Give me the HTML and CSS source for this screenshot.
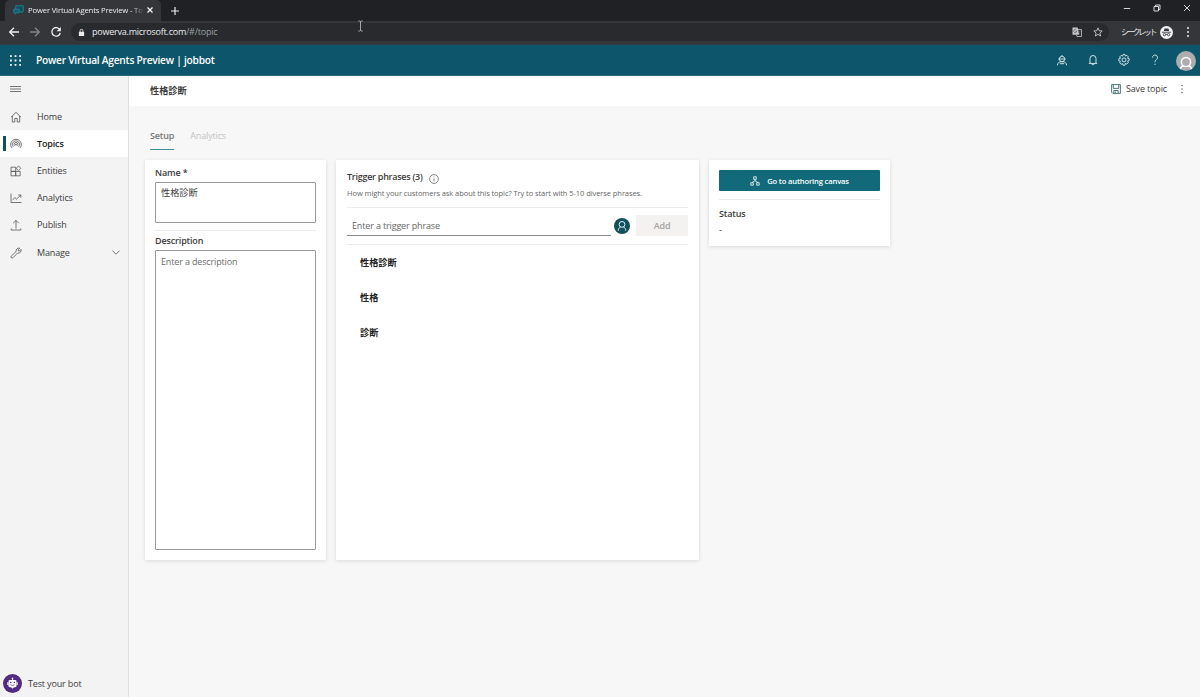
FILE: index.html
```html
<!DOCTYPE html>
<html lang="ja">
<head>
  <meta charset="UTF-8" />
  <meta name="viewport" content="width=device-width, initial-scale=1.0"/>
  <title>Power Virtual Agents Preview - Topics</title>
  <link rel="stylesheet" href="styles.css">
</head>
<body>
  <!-- BROWSER -->
  <div class="tabstrip">
    <div class="tab">
      <svg class="favicon" viewBox="0 0 12 12"><path d="M3 .8h8.2v6.400H9.600v1.600L7.800 7.200H3z" fill="#174b55" stroke="#1c8296"/><path d="M.8 4.500h6v4H4L2.300 10V8.500H.8z" fill="#17616e" stroke="#1a8294"/></svg>
      <span class="tab-title">Power Virtual Agents Preview - To</span>
      <svg class="tab-close" viewBox="0 0 8 8"><path d="M1.500 1.500l5 5M6.500 1.500l-5 5"/></svg>
    </div>
    <svg class="new-tab" viewBox="0 0 10 10"><path d="M5 1v8M1 5h8"/></svg>
    <div class="window-buttons">
      <svg viewBox="0 0 8 8"><path d="M.8 4.500h6.400"/></svg>
      <svg viewBox="0 0 8 8"><path d="M1 2.500h4.500V7H1zM2.500 2.500V1H7v4.500H5.500"/></svg>
      <svg viewBox="0 0 8 8"><path d="M1 1l6 6M7 1L1 7"/></svg>
    </div>
  </div>
  <div class="toolbar">
    <svg class="nav-btn" viewBox="0 0 12 12"><path d="M11 6H1.800M6 1.700L1.700 6 6 10.300"/></svg>
    <svg class="nav-btn dim" viewBox="0 0 12 12"><path d="M1 6h9.200M6 1.700L10.300 6 6 10.300"/></svg>
    <svg class="nav-btn" viewBox="0 0 12 12"><path d="M9.800 3.500A4.300 4.300 0 1 0 10.300 7"/><path d="M10.800 1v4.200H6.600z" fill="#f1f1f1" stroke="none"/></svg>
    <div class="address">
      <svg class="lock" viewBox="0 0 8 9"><path d="M1 3.700h6V8.500H1z" fill="#e8eaed"/><path d="M2.400 4V2.500a1.600 1.600 0 0 1 3.200 0V4" fill="none" stroke="#e8eaed"/></svg>
      <span class="url">powerva.microsoft.com<span class="path">/#/topic</span></span>
      <svg class="translate" viewBox="0 0 10 10"><path d="M.5.500h5.200l1.500 7.300H.5z" fill="#c5c7ca"/><path d="M6 2.500h3.500v7H5L4.500 8" fill="none" stroke="#c5c7ca" stroke-width=".8"/><path d="M4.600 3.200A1.600 1.600 0 1 0 4.800 4.500H3.400M6.800 4.500h2.200M8 3.700v.8c0 1.500-.6 2.300-1 2.700M7 5.500l1.700 2" fill="none" stroke="#55585c" stroke-width=".7"/></svg>
      <svg class="star" viewBox="0 0 10 10"><path d="M5 .9l1.200 2.800 3 .3-2.300 2 .7 3L5 7.400 2.400 9l.7-3L.8 4l3-.3z"/></svg>
    </div>
    <span class="incognito">シークレット</span>
    <svg class="incognito-icon" viewBox="0 0 14 14"><circle cx="7" cy="7" r="7" fill="#f1f3f4" stroke="none"/><path d="M4.900 2.600h4.200l.8 2.900H4.100z" fill="#35363a" stroke="none"/><path d="M2 6.700h10"/><circle cx="4.800" cy="9.300" r="1.300"/><circle cx="9.200" cy="9.300" r="1.300"/><path d="M6.100 9h1.800"/></svg>
    <svg class="kebab" viewBox="0 0 4 12"><circle cx="2" cy="2" r="1"/><circle cx="2" cy="6" r="1"/><circle cx="2" cy="10" r="1"/></svg>
  </div>

  <!-- APP HEADER -->
  <div class="app-header">
    <svg class="waffle" viewBox="0 0 11 11"><path d="M0 1.200h11M0 5.500h11M0 9.800h11" stroke="#fff" stroke-width="1.800" stroke-dasharray="1.800 2.800"/></svg>
    <span class="app-name">Power Virtual Agents Preview | jobbot</span>
    <div class="header-icons">
      <svg viewBox="0 0 12 12"><path d="M6 1v1.500M3.500 4.500a2 2 0 0 1 2-2h1a2 2 0 0 1 2 2v1a2 2 0 0 1-2 2h-1a2 2 0 0 1-2-2zM2.300 5h7.400M1.500 11.300V9.800l2.300-2h4.400l2.300 2v1.500M3.800 9.700h4.400"/></svg>
      <svg viewBox="0 0 12 12"><path d="M1.800 9.400h8.400M3 9.400V4.500a3 3 0 0 1 6 0v4.900M4.800 9.600a1.200 1.200 0 0 0 2.400 0"/></svg>
      <svg viewBox="0 0 12 12"><path d="M5 .6h2l.4 1.500 1.400-.8 1.500 1.500-.8 1.400 1.600.4v2l-1.600.6.8 1.400-1.500 1.500-1.400-.8L7 11.200H5l-.4-1.700-1.400.8-1.500-1.500.8-1.400L.8 6.900V4.800l1.700-.5-.8-1.400 1.500-1.500 1.400.8z"/><circle cx="6" cy="5.900" r="2"/></svg>
      <svg viewBox="0 0 12 12"><path d="M3.500 3.600a2.500 2.500 0 1 1 3.900 2C6.400 6.300 6 6.900 6 8.300M6 9.800V11"/></svg>
    </div>
    <svg class="avatar" viewBox="0 0 20 20"><circle cx="10" cy="10" r="10" fill="#adadad" stroke="none"/><circle cx="10" cy="11" r="4.600"/><path d="M4.300 18.200c.3-1.700 1.200-2.700 2.900-3.700M15.700 18.200c-.3-1.700-1.200-2.700-2.900-3.700"/></svg>
  </div>

  <div class="app">
    <!-- SIDEBAR -->
    <div class="sidebar">
      <svg class="menu-icon" viewBox="0 0 11 8"><path d="M0 1.500h11M0 4h11M0 6.500h11"/></svg>
      <div class="nav-item">
        <svg viewBox="0 0 12 12"><path d="M1 6.200L6 1.300l5 4.900M2.300 5v6h2.500V7.500h2.400V11h2.500V5"/></svg>
        <span>Home</span>
      </div>
      <div class="nav-item active">
        <svg viewBox="0 0 12 12"><path d="M1.900 9.900a5.300 5.300 0 1 1 8.200 0M3.300 8.800a3.600 3.600 0 1 1 5.400 0M4.700 7.700a1.900 1.900 0 1 1 2.600 0"/><circle cx="6" cy="6.600" r=".6"/></svg>
        <span>Topics</span>
      </div>
      <div class="nav-item">
        <svg viewBox="0 0 12 12"><path d="M1 2.200h4.700v4.200H1zM1 6.400h4.700v4.400H1zM5.700 6.400h4.500v4.400H5.700zM8.500 1l2.300 2.300-2.300 2.300-2.300-2.300z"/></svg>
        <span>Entities</span>
      </div>
      <div class="nav-item">
        <svg viewBox="0 0 12 12"><path d="M1 1.500v9h10.500M2.500 8.200l2.300-2.700 1.700 1.600 4.300-4M8.200 3h2.700v2.700"/></svg>
        <span>Analytics</span>
      </div>
      <div class="nav-item">
        <svg viewBox="0 0 12 12"><path d="M6 9.500V1.400M3.200 4.200L6 1.400l2.800 2.800M1.200 9.500V11h9.600V9.500"/></svg>
        <span>Publish</span>
      </div>
      <div class="nav-item">
        <svg viewBox="0 0 12 12"><path d="M6.100 4.500a2.900 2.900 0 0 1 3.700-3.300L8.300 2.700v1.200h1.200L11 2.400a2.900 2.900 0 0 1-3.500 3.700L3 10.700a1.200 1.200 0 0 1-1.700-1.700z"/></svg>
        <span>Manage</span>
        <svg class="chevron" viewBox="0 0 8 5"><path d="M.4.600L4 4.200 7.600.600"/></svg>
      </div>
      <div class="test-bot">
        <svg viewBox="0 0 20 20"><circle cx="10" cy="10" r="10" fill="#532a81"/><path d="M9.600 4.200h.8v2h2.300a1.500 1.500 0 0 1 1.500 1.500v4.800a1.500 1.500 0 0 1-1.500 1.500h-1.200L10 15.600 8.500 14H7.300a1.500 1.500 0 0 1-1.500-1.500V7.700a1.500 1.500 0 0 1 1.500-1.500h2.300zM4.500 8.700h1v3h-1zM14.500 8.700h1v3h-1z" fill="#fff"/><circle cx="10" cy="4.700" r=".9" fill="#fff"/><circle cx="8.100" cy="9" r=".8" fill="#532a81"/><circle cx="11.900" cy="9" r=".8" fill="#532a81"/><path d="M7.900 11.300q2.100 1.600 4.200 0" fill="none" stroke="#532a81" stroke-width=".8"/></svg>
        <span>Test your bot</span>
      </div>
    </div>

    <!-- MAIN CONTENT -->
    <div class="main">
      <div class="topic-bar">
        <h1>性格診断</h1>
        <div class="save">
          <svg viewBox="0 0 10 10"><path d="M.6.600h8.800v8.800H1.800L.6 8.200zM2.300.600v3.800h5.400V.600M2.800 9.400V6.500h4.400v2.900M4.300 7.500v1.900"/></svg>
          <span>Save topic</span>
        </div>
        <svg class="more" viewBox="0 0 4 10"><circle cx="2" cy="1.500" r=".7"/><circle cx="2" cy="5" r=".7"/><circle cx="2" cy="8.500" r=".7"/></svg>
      </div>
      <div class="pivot">
        <span class="selected">Setup</span>
        <span>Analytics</span>
      </div>
      <div class="cards">
        <div class="card details">
          <label>Name *</label>
          <div class="field name-field">性格診断</div>
          <hr>
          <label>Description</label>
          <div class="field desc-field">Enter a description</div>
        </div>

        <div class="card triggers">
          <div class="trigger-title">
            <h2>Trigger phrases (3)</h2>
            <svg viewBox="0 0 10 10"><circle cx="5" cy="5" r="4.400"/><path d="M5 4.400v3M5 2.500v.9"/></svg>
          </div>
          <p class="hint">How might your customers ask about this topic? Try to start with 5-10 diverse phrases.</p>
          <div class="trigger-entry">
            <div class="trigger-input">Enter a trigger phrase</div>
            <svg viewBox="0 0 16 16"><circle cx="8" cy="8" r="8" fill="#12505f" stroke="none"/><circle cx="8" cy="6.400" r="2.900"/><path d="M4.200 12.800c.2-2.200 1.200-3.500 2.400-3.900M11.800 12.800c-.2-2.200-1.200-3.500-2.400-3.900"/></svg>
            <div class="add-btn">Add</div>
          </div>
          <ul>
            <li>性格診断</li>
            <li>性格</li>
            <li>診断</li>
          </ul>
        </div>

        <div class="card side">
          <div class="canvas-btn">
            <svg viewBox="0 0 10 10"><path d="M3.700.800h2.600v2.500H3.700zM.8 6.700h2.500v2.500H.8zM6.700 6.700h2.500v2.500H6.700zM5 3.300v1.500M2 6.700L5 4.600l3 2.100"/></svg>
            <span>Go to authoring canvas</span>
          </div>
          <hr>
          <label>Status</label>
          <div class="status">-</div>
        </div>
      </div>
    </div>
  </div>

  <!-- mouse cursor -->
  <svg class="cursor" viewBox="0 0 5 11"><path d="M.3.500h1.500l.7.500.7-.500h1.500M2.500 1v9M.3 10.500h1.500l.7-.500.7.500h1.500"/></svg>
</body>
</html>
```
FILE: styles.css
```css
* { margin: 0; padding: 0; box-sizing: border-box; }

body {
  height: 697px;
  display: flex;
  flex-direction: column;
  overflow: hidden;
  font-family: 'Open Sans', 'Noto Sans CJK JP', sans-serif;
  font-size: 9px;
  letter-spacing: -0.15px;
  line-height: 12px;
  color: #3c3c3c;
  background: #f7f7f7;
}

svg {
  display: block;
  flex: none;
  fill: none;
}

span, label, h1, h2, .hint { white-space: nowrap; }

/* browser */
.tabstrip {
  height: 21px;
  display: flex;
  align-items: center;
  background: #202124;
  padding-left: 5px;
}

.tab {
  width: 156px;
  height: 21px;
  display: flex;
  align-items: center;
  padding: 0 7px 1px 8px;
  background: #35363a;
  border-radius: 5px 5px 0 0;
}

.favicon { width: 11px; height: 11px; }

.tab-title {
  width: 115px;
  margin-left: 4px;
  font-size: 7.7px;
  letter-spacing: -0.16px;
  color: #e8eaed;
  -webkit-mask-image: linear-gradient(to right, #000 103px, transparent 117px);
  mask-image: linear-gradient(to right, #000 103px, transparent 117px);
}

.tab-close { width: 8px; height: 8px; margin-left: 3px; stroke: #fff; stroke-width: 1.2; }
.new-tab { width: 10px; height: 10px; margin-left: 9px; stroke: #e8eaed; stroke-width: 1.2; }

.window-buttons {
  margin-left: auto;
  display: flex;
  gap: 22px;
  padding: 0 9px 5px 0;
}

.window-buttons svg { width: 8px; height: 8px; stroke: #e8eaed; stroke-width: 0.9; }

.toolbar {
  height: 24px;
  display: flex;
  align-items: center;
  padding: 0 0 1px 8px;
  background: #35363a;
  border-bottom: 1px solid #2e3f45;
}

.nav-btn { width: 12px; height: 12px; margin-right: 9px; stroke: #f1f1f1; stroke-width: 1.3; }
.nav-btn.dim { stroke: #85878a; }

.address {
  width: 1038px;
  height: 18px;
  display: flex;
  align-items: center;
  padding: 0 6px 0 7px;
  border-radius: 9px;
  background: #282a2d;
}

.lock { width: 7px; height: 9px; }

.url {
  margin-left: 7px;
  font-size: 9px;
  letter-spacing: -0.23px;
  color: #e8eaed;
}

.path { color: #9aa0a6; }
.translate { width: 10px; height: 10px; margin-left: auto; }
.star { width: 10px; height: 10px; margin-left: 11px; stroke: #dadce0; stroke-width: 0.8; }

.incognito {
  width: 35px;
  margin-left: 12px;
  font-family: 'Noto Sans CJK JP', sans-serif;
  font-size: 8px;
  letter-spacing: -2.3px;
  color: #e8eaed;
}

.incognito-icon { width: 13px; height: 13px; margin-left: 4px; stroke: #35363a; stroke-width: 0.9; }
.kebab { width: 4px; height: 12px; margin-left: 13px; fill: #e8eaed; }

/* app header */
.app-header {
  height: 31px;
  display: flex;
  align-items: center;
  padding-left: 10px;
  background: #0c556a;
  border-bottom: 1px solid #2c6a7c;
}

.waffle { width: 11px; height: 11px; }

.app-name {
  margin-left: 15px;
  font-size: 10.2px;
  font-weight: 600;
  letter-spacing: -0.24px;
  color: #fff;
}

.header-icons {
  margin-left: auto;
  display: flex;
  gap: 19px;
}

.header-icons svg { width: 12px; height: 12px; stroke: #e4eef0; stroke-width: 0.9; }

.avatar {
  width: 20px;
  height: 20px;
  margin: 2px 4px 0 15px;
  stroke: #fff;
  stroke-width: 1.5;
}

.app { flex: 1; display: flex; }

/* sidebar */
.sidebar {
  width: 129px;
  display: flex;
  flex-direction: column;
  padding-top: 9px;
  background: #f3f3f3;
  border-right: 1px solid #dedede;
}

.menu-icon { width: 11px; height: 8px; margin: 0 0 10px 10px; stroke: #666; stroke-width: 0.9; }

.nav-item {
  height: 27.2px;
  display: flex;
  align-items: center;
  padding: 0 8px 0 10px;
}

.nav-item svg { width: 12px; height: 12px; stroke: #555; stroke-width: 0.8; }
.nav-item span { margin-left: 15px; }
.nav-item .chevron { width: 8px; height: 5px; margin-left: auto; }

.nav-item.active {
  padding-left: 3px;
  background: #fff;
  font-weight: 600;
  color: #222;
}

.nav-item.active::before {
  content: "";
  width: 3px;
  height: 15px;
  margin-right: 4px;
  background: #12505f;
}

.test-bot {
  margin-top: auto;
  padding: 0 0 4px 3px;
  display: flex;
  align-items: center;
  gap: 6px;
}

.test-bot svg { width: 19px; height: 19px; }

/* topic page */
.main { flex: 1; }

.topic-bar {
  height: 30px;
  display: flex;
  align-items: center;
  padding-left: 21px;
  background: #fff;
}

.topic-bar h1 { font-size: 9.2px; font-weight: 600; letter-spacing: 0; }

.save {
  margin: 0 13px 4px auto;
  display: flex;
  align-items: center;
  gap: 5px;
}

.save svg { width: 10px; height: 10px; stroke: #3d6872; stroke-width: 0.9; }
.more { width: 4px; height: 10px; margin: 0 16px 4px 0; fill: #555; }

.pivot {
  display: flex;
  gap: 16px;
  padding: 24px 0 0 21px;
  color: #c4c4c4;
}

.pivot span { height: 20px; }

.pivot .selected {
  font-weight: 600;
  color: #777;
  border-bottom: 1px solid #3c8f9b;
}

.cards {
  display: flex;
  align-items: flex-start;
  gap: 10px;
  padding: 10px 0 0 16px;
}

.card {
  background: #fff;
  box-shadow: 0 1px 4px rgba(0, 0, 0, 0.12);
}

.card label { display: block; font-weight: 600; }
.card hr { border: 0; border-top: 1px solid #ececec; }

.details { width: 181px; height: 400px; padding: 7px 10px 0; }

.field {
  border: 1px solid #999;
  border-radius: 1px;
  padding: 5px;
}

.name-field { height: 41px; margin: 3px 0 7px; padding-top: 4px; font-size: 9.2px; letter-spacing: 0; }
.desc-field { height: 300px; margin-top: 3px; color: #6b6b6b; }
.details hr { margin-bottom: 4px; }

.triggers { width: 363px; height: 400px; padding: 11px 11px 0; }

.trigger-title { display: flex; gap: 6px; height: 14px; }
.trigger-title h2 { font-size: 9px; font-weight: 600; letter-spacing: -0.26px; }
.trigger-title svg { width: 10px; height: 10px; margin-top: 3px; stroke: #666; stroke-width: 0.8; }

.hint {
  height: 22px;
  padding-top: 2px;
  font-size: 7.5px;
  letter-spacing: -0.07px;
  color: #666;
}

.trigger-entry {
  height: 38px;
  display: flex;
  align-items: center;
  padding-bottom: 1px;
  border-top: 1px solid #ececec;
  border-bottom: 1px solid #ececec;
}

.trigger-input {
  width: 265px;
  height: 21px;
  padding: 5px 5px 0;
  color: #666;
  border-bottom: 1px solid #8a8a8a;
}

.trigger-entry svg { width: 16px; height: 16px; margin: 0 6px 0 3px; stroke: #dff0f2; stroke-width: 1; }

.add-btn {
  width: 52px;
  height: 21px;
  line-height: 21px;
  text-align: center;
  font-weight: 600;
  color: #a5a3a1;
  background: #f3f2f1;
}

.triggers ul { list-style: none; }

.triggers li {
  height: 35px;
  line-height: 35px;
  padding-left: 13px;
  font-size: 9.2px;
  font-weight: 600;
  letter-spacing: 0;
  color: #222;
}

.side { width: 181px; height: 86px; padding: 10px 10px 0; }

.canvas-btn {
  height: 21px;
  display: flex;
  align-items: center;
  justify-content: center;
  gap: 7px;
  margin-bottom: 8px;
  font-size: 7.6px;
  font-weight: 600;
  color: #fff;
  background: #11697a;
  border-radius: 1px;
}

.canvas-btn svg { width: 10px; height: 10px; stroke: #fff; stroke-width: 0.8; }
.side label { margin: 8px 0 4px; }

.cursor {
  position: absolute;
  left: 358px;
  top: 20px;
  width: 5px;
  height: 12px;
  stroke: #c8c8c8;
  stroke-width: 0.8;
}
```
